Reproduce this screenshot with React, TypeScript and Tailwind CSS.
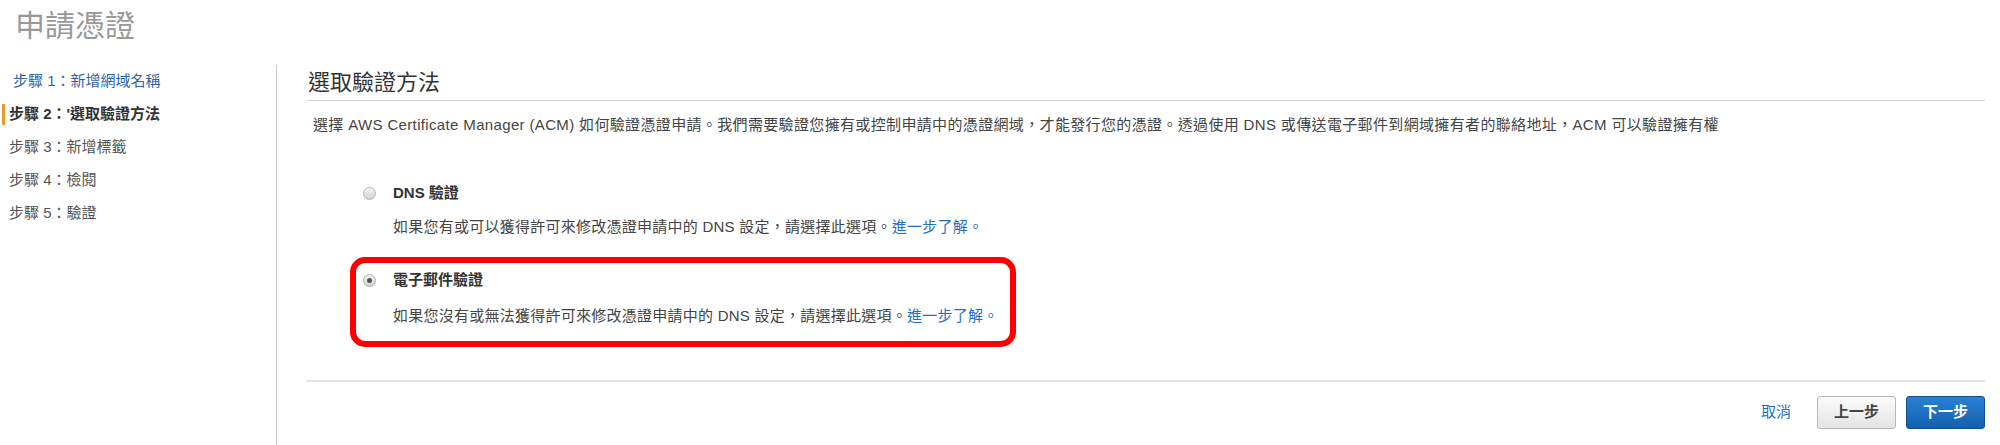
import React from 'react';

const steps = [
  { label: '步驟 1：新增網域名稱', state: 'done' },
  { label: "步驟 2：'選取驗證方法", state: 'current' },
  { label: '步驟 3：新增標籤', state: 'todo' },
  { label: '步驟 4：檢閱', state: 'todo' },
  { label: '步驟 5：驗證', state: 'todo' },
];

function Radio({ checked }: { checked?: boolean }) {
  return (
    <span className="w-[13px] h-[13px] rounded-full border border-[#b3b3b3] bg-gradient-to-b from-[#f4f4f4] to-[#d2d2d2] flex items-center justify-center shrink-0">
      {checked && <span className="w-[5px] h-[5px] rounded-full bg-[#555]" />}
    </span>
  );
}

function Option({
  title,
  body,
  checked,
  highlight,
}: {
  title: string;
  body: string;
  checked?: boolean;
  highlight?: boolean;
}) {
  return (
    <div
      className={
        highlight
          ? 'ml-[43px] w-[666px] border-[6px] border-[#ff0000] rounded-[15px] pt-[6px] pb-[14px]'
          : 'ml-[43px] w-[666px] border-[6px] border-transparent rounded-[15px] mt-[34px] pt-[6px] pb-[13px]'
      }
    >
      <div className="flex items-center h-[22px] pl-[7px]">
        <Radio checked={checked} />
        <span className="ml-[17px] font-bold text-[15px] text-[#333]">{title}</span>
      </div>
      <div
        className={
          highlight
            ? 'mt-[14px] pl-[37px] leading-[22px] text-[15px] tracking-[0.25px] text-[#444]'
            : 'mt-[12px] pl-[37px] leading-[22px] text-[15px] tracking-[0.25px] text-[#444]'
        }
      >
        {body}
        <a className="text-[#1f6fc5]">進一步了解。</a>
      </div>
    </div>
  );
}

export default function App() {
  return (
    <div
      className="w-[2000px] h-[445px] bg-white overflow-hidden flex flex-col"
      style={{ fontFamily: '"Liberation Sans", "Noto Sans CJK TC", sans-serif' }}
    >
      <h1 className="pl-[15px] pt-[6px] text-[30px] leading-[40px] text-[#999] font-normal">申請憑證</h1>

      <div className="flex flex-1 mt-[19px]">
        <nav className="w-[277px] border-r border-[#c8c8c8] shrink-0">
          {steps.map((step) => {
            if (step.state === 'current') {
              return (
                <div key={step.label} className="h-[33px] flex items-center">
                  <span className="ml-[2px] w-[3px] h-[21px] bg-[#eb9a2b]" />
                  <span className="ml-[4px] text-[15px] font-bold text-[#333]">{step.label}</span>
                </div>
              );
            }
            return (
              <div
                key={step.label}
                className={
                  step.state === 'done'
                    ? 'h-[33px] flex items-center pl-[13px] text-[15px] text-[#2f62ab]'
                    : 'h-[33px] flex items-center pl-[9px] text-[15px] text-[#555]'
                }
              >
                {step.label}
              </div>
            );
          })}
        </nav>

        <main className="flex-1 pl-[30px] pr-[15px]">
          <h2 className="h-[36px] leading-[35px] text-[22px] text-[#333] font-normal border-b border-[#cfcfcf] pl-[1px]">
            選取驗證方法
          </h2>
          <p className="mt-[13px] pl-[6px] leading-[22px] text-[15px] tracking-[0.35px] text-[#444]">
            選擇 AWS Certificate Manager (ACM) 如何驗證憑證申請。我們需要驗證您擁有或控制申請中的憑證網域，才能發行您的憑證。透過使用 DNS 或傳送電子郵件到網域擁有者的聯絡地址，ACM 可以驗證擁有權
          </p>

          <Option
            title="DNS 驗證"
            body="如果您有或可以獲得許可來修改憑證申請中的 DNS 設定，請選擇此選項。"
          />
          <Option
            title="電子郵件驗證"
            body="如果您沒有或無法獲得許可來修改憑證申請中的 DNS 設定，請選擇此選項。"
            checked
            highlight
          />

          <div className="mt-[33px] border-t-2 border-[#e2e2e2]" />

          <div className="mt-[14px] flex items-center justify-end">
            <a className="text-[15px] text-[#1f6fc5] mr-[26px]">取消</a>
            <button className="w-[79px] h-[33px] rounded-[3px] border border-[#b8b8b8] bg-gradient-to-b from-[#fbfbfb] to-[#e4e4e4] text-[15px] font-bold text-[#444]">
              上一步
            </button>
            <button className="ml-[10px] w-[79px] h-[33px] rounded-[3px] border border-[#0f4f93] bg-gradient-to-b from-[#2a81d6] to-[#135fae] text-[15px] font-bold text-white">
              下一步
            </button>
          </div>
        </main>
      </div>
    </div>
  );
}
